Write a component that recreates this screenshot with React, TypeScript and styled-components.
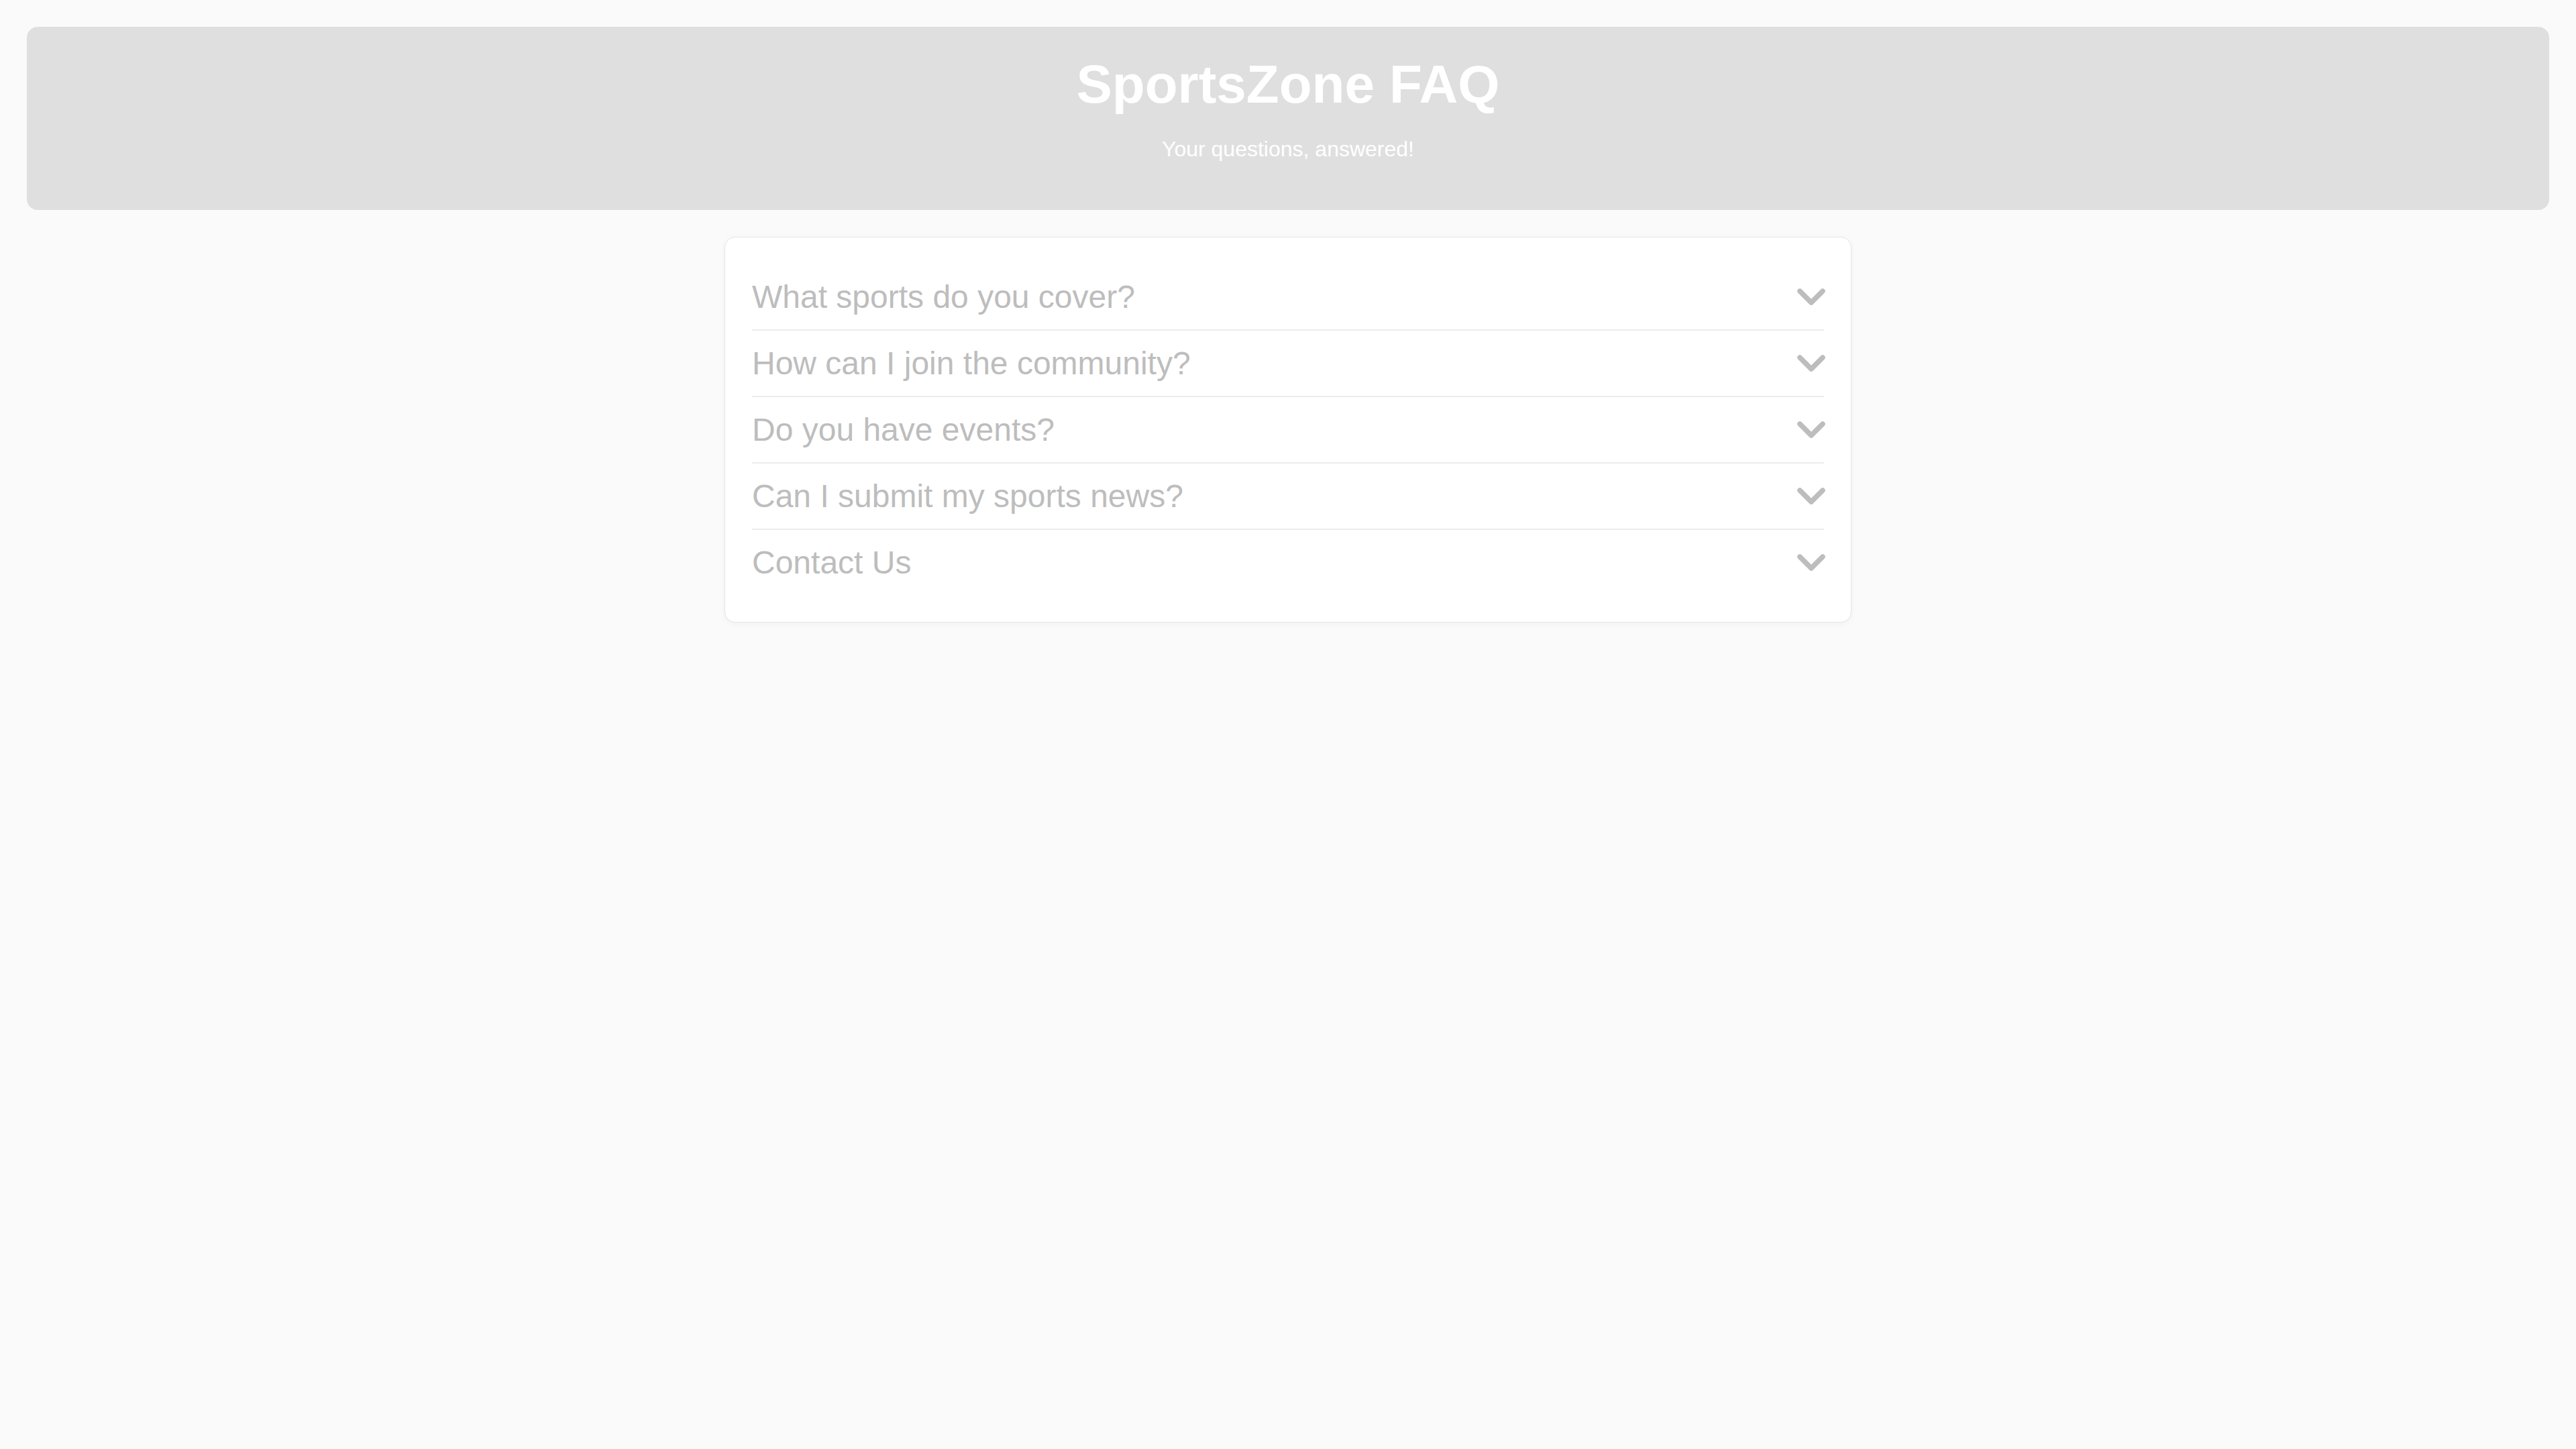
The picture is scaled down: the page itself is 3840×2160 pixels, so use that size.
import React from "react";
import styled, { createGlobalStyle } from "styled-components";

const GlobalStyle = createGlobalStyle`
  html, body {
    margin: 0;
    padding: 0;
    background: #fafafa;
    font-family: "Liberation Sans", Arial, sans-serif;
  }
  * { box-sizing: border-box; }
`;

const Page = styled.div`
  padding: 40px;
  min-height: 2160px;
  background: #fafafa;
`;

const Header = styled.header`
  background: #dfdfdf;
  border-radius: 16px;
  padding: 40px;
  text-align: center;
  color: #ffffff;
`;

const Title = styled.h1`
  margin: 0;
  font-size: 80px;
  font-weight: 700;
  line-height: normal;
`;

const Subtitle = styled.p`
  margin: 32px 0;
  font-size: 32px;
  line-height: normal;
`;

const Card = styled.section`
  width: 1680px;
  margin: 40px auto 0;
  padding: 40px;
  background: #ffffff;
  border-radius: 16px;
  border: 1px solid #e6e6e6;
  box-shadow: 0 2px 10px rgba(0, 0, 0, 0.04);
`;

const Item = styled.div<{ $last?: boolean }>`
  display: flex;
  align-items: center;
  justify-content: space-between;
  padding: 21px 0;
  border-bottom: ${(p) => (p.$last ? "none" : "2px solid #ececec")};
`;

const Question = styled.span`
  font-size: 48px;
  line-height: normal;
  color: #bdbdbd;
`;

const Chevron = styled.svg`
  width: 42px;
  height: 25px;
  flex: none;
  margin-right: -2px;
`;

const questions = [
  "What sports do you cover?",
  "How can I join the community?",
  "Do you have events?",
  "Can I submit my sports news?",
  "Contact Us",
];

export default function App() {
  return (
    <>
      <GlobalStyle />
      <Page>
        <Header>
          <Title>SportsZone FAQ</Title>
          <Subtitle>Your questions, answered!</Subtitle>
        </Header>
        <Card>
          {questions.map((q, i) => (
            <Item key={q} $last={i === questions.length - 1}>
              <Question>{q}</Question>
              <Chevron viewBox="0 0 42 25" aria-hidden="true">
                <polyline
                  points="4,4 21,21 38,4"
                  fill="none"
                  stroke="#bdbdbd"
                  strokeWidth="7.5"
                  strokeLinecap="round"
                  strokeLinejoin="round"
                />
              </Chevron>
            </Item>
          ))}
        </Card>
      </Page>
    </>
  );
}
